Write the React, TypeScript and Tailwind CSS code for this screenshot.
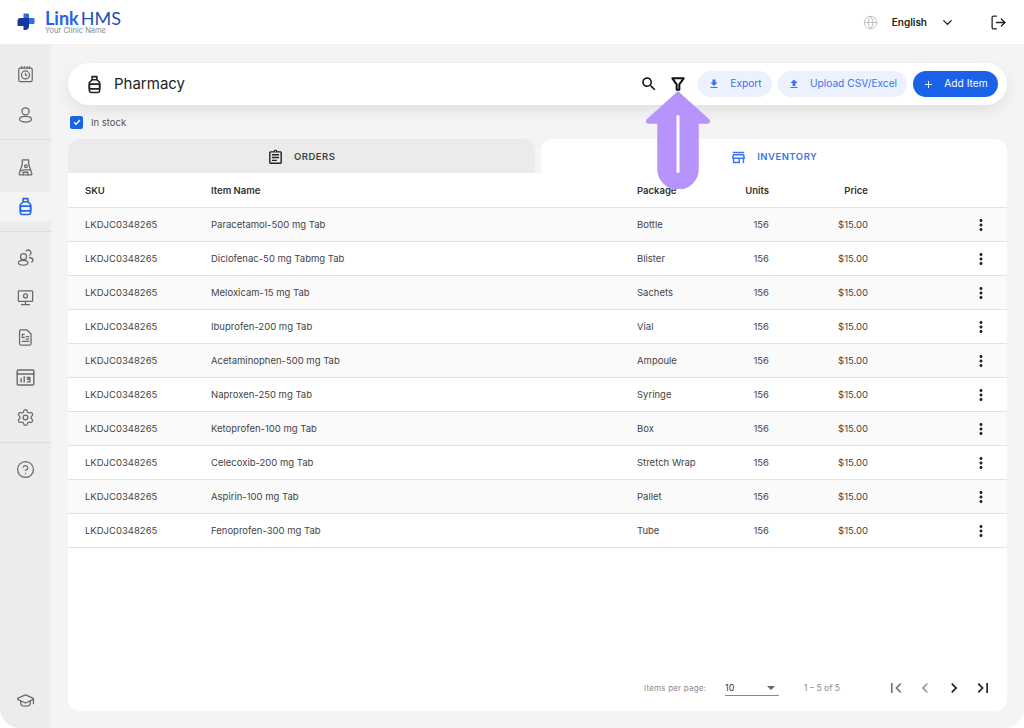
import { ChevronDown, CircleHelp, GraduationCap, Globe, LogOut, Plus, Settings } from "lucide-react";

const rows = [
  ["Paracetamol-500 mg Tab", "Bottle"],
  ["Diclofenac-50 mg Tabmg Tab", "Blister"],
  ["Meloxicam-15 mg Tab", "Sachets"],
  ["Ibuprofen-200 mg Tab", "Vial"],
  ["Acetaminophen-500 mg Tab", "Ampoule"],
  ["Naproxen-250 mg Tab", "Syringe"],
  ["Ketoprofen-100 mg Tab", "Box"],
  ["Celecoxib-200 mg Tab", "Stretch Wrap"],
  ["Aspirin-100 mg Tab", "Pallet"],
  ["Fenoprofen-300 mg Tab", "Tube"],
];

function Mat({ d, className }: { d: string; className?: string }) {
  return (
    <svg viewBox="0 0 24 24" fill="currentColor" className={className}>
      <path d={d} />
    </svg>
  );
}

function Line({ children, className }: { children: React.ReactNode; className?: string }) {
  return (
    <svg viewBox="0 0 24 24" fill="none" stroke="currentColor" strokeWidth="1.6" strokeLinecap="round" strokeLinejoin="round" className={className}>
      {children}
    </svg>
  );
}

function Bottle({ className }: { className?: string }) {
  return (
    <svg viewBox="0 0 24 24" fill="none" stroke="currentColor" strokeWidth="2" strokeLinejoin="round" className={className}>
      <path d="M9 2h6v4H9z" />
      <path d="M9 6 5.500 9.500V20a2 2 0 0 0 2 2h9a2 2 0 0 0 2-2V9.500L15 6" />
      <path d="M5.500 11.500h13v6h-13z" />
    </svg>
  );
}

function NavItem({ children, active }: { children: React.ReactNode; active?: boolean }) {
  return (
    <div className={`flex h-[29px] items-center justify-center ${active ? "bg-[#f4f4f4] text-[#2563eb]" : "text-[#6a6a6a]"}`}>
      {children}
    </div>
  );
}

function Sidebar() {
  const ic = "h-[19px] w-[19px]";
  return (
    <aside className="flex w-[51px] shrink-0 flex-col rounded-bl-[20px] bg-[#ececec]">
      <div className="flex flex-col gap-[11px] pt-[15px] pb-[10px]">
        <NavItem>
          <Line className={ic}>
            <rect x="3.500" y="4" width="17" height="17" rx="2" />
            <path d="M7 2v2M10.500 2v2M14 2v2M17 2v2" />
            <circle cx="12" cy="12.500" r="5" />
            <path d="M12 10.500v2.200l1.500 1" />
          </Line>
        </NavItem>
        <NavItem>
          <Line className={ic}>
            <circle cx="12" cy="8" r="4.500" />
            <ellipse cx="12" cy="18" rx="7.500" ry="3.500" />
          </Line>
        </NavItem>
      </div>
      <div className="h-px bg-[#dcdcdc]" />
      <div className="flex flex-col pt-[13px] pb-[10px]">
        <NavItem>
          <Line className={ic}>
            <path d="M8 2.500h8v5l4 12.500a1 1 0 0 1-1 1.200H5a1 1 0 0 1-1-1.200L8 7.500z" />
            <path d="M5.500 16.500c4-3 9-1 13-1.500M9 21v-3h6v3" />
            <circle cx="12.500" cy="10.500" r="1.800" />
          </Line>
        </NavItem>
        <div className="h-[10px]" />
        <NavItem active>
          <Bottle className={ic} />
        </NavItem>
      </div>
      <div className="h-px bg-[#dcdcdc]" />
      <div className="flex flex-col gap-[11px] pt-[11px] pb-[10px]">
        <NavItem>
          <Line className={ic}>
            <circle cx="9.500" cy="11" r="3.800" />
            <ellipse cx="9" cy="18.500" rx="6" ry="3" />
            <path d="M13 3.500a3.500 3.500 0 0 1 4.500 5.500M17 12c2.500.3 4.500 1.800 4.500 3.500 0 1-.7 1.800-1.800 2.300" />
          </Line>
        </NavItem>
        <NavItem>
          <Line className={ic}>
            <rect x="3" y="3.500" width="18" height="13.500" rx="1" />
            <circle cx="12" cy="10" r="2.500" />
            <path d="M12 17v3.500M7 21h10" />
          </Line>
        </NavItem>
        <NavItem>
          <Line className={ic}>
            <path d="M6 2.500h8l5 5V20a1.500 1.500 0 0 1-1.500 1.500h-11.500A1.500 1.500 0 0 1 4.500 20V4A1.500 1.500 0 0 1 6 2.500z" />
            <path d="M8 8h2.500M8 12h2.500M8 8.500v3M13 11h3M13 14h3M8 17h8" />
          </Line>
        </NavItem>
        <NavItem>
          <Line className="h-[21px] w-[21px]">
            <rect x="2.500" y="3.500" width="19" height="17" rx="1" />
            <path d="M2.500 8h19M7 13v4M10.500 11v6M14 12h3v2h-3M17 14v3h-3" />
          </Line>
        </NavItem>
        <NavItem>
          <Settings className={ic} strokeWidth={1.6} />
        </NavItem>
      </div>
      <div className="h-px bg-[#dcdcdc]" />
      <div className="pt-[12px]">
        <NavItem>
          <CircleHelp className={ic} strokeWidth={1.6} />
        </NavItem>
      </div>
      <div className="mt-auto pb-[13px]">
        <NavItem>
          <GraduationCap className={ic} strokeWidth={1.6} />
        </NavItem>
      </div>
    </aside>
  );
}

function Header() {
  return (
    <header className="flex h-[45px] shrink-0 items-center border-b border-[#f0f0f0] bg-white pl-[17px] pr-[17px]">
      <svg viewBox="0 0 18 18" className="h-[18px] w-[18px]">
        <path d="M6.500 0.500H11a1 1 0 0 1 1 1V5h-5.500z" fill="#2f6fe4" />
        <path d="M12 5h4.500a1 1 0 0 1 1 1v4a1 1 0 0 1-1 1H12z" fill="#2f6fe4" />
        <path d="M6.500 5H12v8a4 4 0 0 1-4 4H7a.5.500 0 0 1-.5-.5V13H1.500a1 1 0 0 1-1-1V8A3 3 0 0 1 3.500 5z" fill="#14389c" />
      </svg>
      <div className="ml-[10px] flex flex-col font-['Lato',sans-serif]">
        <div className="h-[18px] text-[18px] leading-[18px]">
          <span className="font-bold text-[#2563eb]">Link</span>
          <span className="ml-[2px] text-[#2050b8]">HMS</span>
        </div>
        <div className="h-[8px] font-['Inter',sans-serif] text-[7.500px] leading-[8px] text-[#8a8a8a]">Your Clinic Name</div>
      </div>
      <Globe className="ml-auto h-[15px] w-[15px] text-[#bdbdbd]" strokeWidth={1.5} />
      <span className="ml-[14px] font-['Inter',sans-serif] text-[10px] font-semibold text-[#222]">English</span>
      <ChevronDown className="ml-[13px] h-[15px] w-[15px] text-[#222]" strokeWidth={2.2} />
      <LogOut className="ml-[35px] h-[17px] w-[17px] text-[#222]" strokeWidth={1.8} />
    </header>
  );
}

function Toolbar() {
  return (
    <div className="flex h-[42px] items-center rounded-[21px] bg-white pl-[17px] pr-[9px] shadow-[0_6px_16px_rgba(0,0,0,0.08)]">
      <Bottle className="h-[19px] w-[19px] text-[#222]" />
      <h1 className="ml-[10px] text-[15px] font-normal text-[#222]">Pharmacy</h1>
      <Mat
        className="ml-auto h-[18px] w-[18px] text-[#111]"
        d="M15.500 14h-.79l-.28-.27C15.410 12.590 16 11.110 16 9.500 16 5.910 13.090 3 9.500 3S3 5.910 3 9.500 5.910 16 9.500 16c1.610 0 3.090-.59 4.230-1.570l.27.28v.79l5 4.990L20.490 19l-4.990-5zm-6 0C7.010 14 5 11.990 5 9.500S7.010 5 9.500 5 14 7.010 14 9.500 11.990 14 9.500 14z"
      />
      <svg viewBox="0 0 24 24" fill="none" stroke="#111" strokeWidth="3" strokeLinejoin="round" className="ml-[12px] h-[16px] w-[16px]">
        <path d="M3.500 3.500h17L14 12.500v8h-4v-8z" />
      </svg>
      <button className="ml-[12px] flex h-[26px] w-[74px] items-center justify-center gap-[10px] rounded-[13px] bg-[#ebf2fe] text-[10.200px] text-[#3b74e8]">
        <Mat className="h-[12px] w-[12px]" d="M19 9h-4V3H9v6H5l7 7 7-7zM5 18v2h14v-2H5z" />
        Export
      </button>
      <button className="ml-[6px] flex h-[26px] w-[129px] items-center justify-center gap-[10px] rounded-[13px] bg-[#ebf2fe] text-[10.200px] text-[#3b74e8]">
        <Mat className="h-[12px] w-[12px]" d="M9 16h6v-6h4l-7-7-7 7h4zm-4 2h14v2H5z" />
        Upload CSV/Excel
      </button>
      <button className="ml-[6px] flex h-[26px] w-[85px] items-center justify-center gap-[10px] rounded-[13px] bg-[#1a62e8] text-[10.200px] text-white">
        <Plus className="h-[11px] w-[11px]" strokeWidth={2} />
        Add Item
      </button>
    </div>
  );
}

function Tabs() {
  return (
    <div className="flex h-[34px] gap-[6px]">
      <div className="flex flex-1 items-center justify-center gap-[10px] rounded-t-[12px] bg-[#ebebeb] pt-[2px] text-[9.500px] font-semibold tracking-[0.5px] text-[#444]">
        <Mat
          className="h-[17px] w-[17px] text-[#222]"
          d="M19 3h-4.180C14.400 1.840 13.300 1 12 1s-2.400.84-2.820 2H5c-1.100 0-2 .9-2 2v14c0 1.100.9 2 2 2h14c1.100 0 2-.9 2-2V5c0-1.100-.9-2-2-2zm-7-.25c.41 0 .75.34.75.75s-.34.75-.75.75-.75-.34-.75-.75.34-.75.75-.75zM19 19H5V5h14v14zM7 7h10v2H7zm0 4h10v2H7zm0 4h7v2H7z"
        />
        ORDERS
      </div>
      <div className="flex flex-1 items-center justify-center gap-[10px] rounded-t-[12px] bg-white pt-[2px] text-[9.500px] font-semibold tracking-[0.5px] text-[#3b74e8]">
        <Mat
          className="h-[17px] w-[17px]"
          d="M18.360 9l.6 3H5.040l.6-3h12.720M20 4H4v2h16V4zm0 3H4l-1 5v2h1v6h10v-6h4v6h2v-6h1v-2l-1-5zM6 18v-4h6v4H6z"
        />
        INVENTORY
      </div>
    </div>
  );
}

const cols = "grid grid-cols-[126px_426px_108px_24px_99px_1fr] items-center pl-[17px] pt-[2px] text-[9.500px]";

function Table() {
  return (
    <div className="flex flex-1 flex-col rounded-b-[12px] bg-white">
      <div className={`${cols} h-[35px] border-b border-[#e2e2e2] font-semibold text-[#333]`}>
        <span>SKU</span>
        <span>Item Name</span>
        <span>Package</span>
        <span className="text-right">Units</span>
        <span className="text-right">Price</span>
      </div>
      {rows.map(([name, pkg], i) => (
        <div key={name} className={`${cols} h-[34px] border-b border-[#e2e2e2] text-[#444] ${i % 2 === 0 ? "bg-[#fafafa]" : "bg-white"}`}>
          <span>LKDJC0348265</span>
          <span>{name}</span>
          <span>{pkg}</span>
          <span className="text-right">156</span>
          <span className="text-right">$15.00</span>
          <span className="-mt-[2px] flex justify-end pr-[17px]">
            <Mat
              className="h-[18px] w-[18px] text-[#222]"
              d="M12 8c1.100 0 2-.9 2-2s-.9-2-2-2-2 .9-2 2 .9 2 2 2zm0 2c-1.100 0-2 .9-2 2s.9 2 2 2 2-.9 2-2-.9-2-2-2zm0 6c-1.100 0-2 .9-2 2s.9 2 2 2 2-.9 2-2-.9-2-2-2z"
            />
          </span>
        </div>
      ))}
      <div className="mt-auto flex h-[46px] items-center pb-[1px] pl-[576px] text-[#8a8a8a]">
        <span className="w-[62px] whitespace-nowrap text-[8px] tracking-[0.2px]">Items per page:</span>
        <div className="ml-[19px] flex h-[17px] w-[54px] items-center justify-between border-b border-[#8a8a8a] pt-[1px] text-[9px] text-[#333]">
          10
          <span className="mr-[4px] h-0 w-0 border-x-[4px] border-t-[4px] border-x-transparent border-t-[#666]" />
        </div>
        <span className="ml-[25px] w-[40px] whitespace-nowrap pt-[2px] text-[8.500px]">1 – 5 of 5</span>
        <div className="ml-[42px] flex gap-[9px]">
          <Mat className="h-[20px] w-[20px] text-[#777]" d="M18.410 16.590L13.820 12l4.590-4.590L17 6l-6 6 6 6zM6 6h2v12H6z" />
          <Mat className="h-[20px] w-[20px] text-[#999]" d="M15.410 7.410L14 6l-6 6 6 6 1.410-1.410L10.830 12z" />
          <Mat className="h-[20px] w-[20px] text-[#222]" d="M10 6L8.590 7.410 13.170 12l-4.580 4.590L10 18l6-6z" />
          <Mat className="h-[20px] w-[20px] text-[#222]" d="M5.590 7.410L10.180 12l-4.590 4.590L7 18l6-6-6-6zM16 6h2v12h-2z" />
        </div>
      </div>
    </div>
  );
}

export default function App() {
  return (
    <div className="relative flex h-[728px] w-[1024px] flex-col overflow-hidden bg-white font-['Inter',sans-serif]">
      <Header />
      <div className="flex min-h-0 flex-1">
        <Sidebar />
        <main className="flex flex-1 flex-col rounded-br-[20px] bg-[#f4f4f4] px-[17px] pb-[17px] pt-[18px]">
          <Toolbar />
          <label className="flex h-[34px] items-center gap-[8px] pl-[2px] text-[9.500px] text-[#555]">
            <span className="flex h-[13px] w-[13px] items-center justify-center rounded-[2px] bg-[#1a62e8]">
              <svg viewBox="0 0 12 12" fill="none" stroke="white" strokeWidth="1.600" className="h-[10px] w-[10px]">
                <path d="M2.500 6.200l2.400 2.400 4.600-5" />
              </svg>
            </span>
            <span className="pt-[2px]">In stock</span>
          </label>
          <Tabs />
          <Table />
        </main>
      </div>
      <svg viewBox="0 0 64 98" className="absolute left-[646px] top-[91px] h-[98px] w-[64px]">
        <path d="M32 1 63 29a1.800 1.800 0 0 1-1.500 3H52v46a20 20 0 0 1-40 0V32H2.500A1.800 1.800 0 0 1 1 29z" fill="#b794fb" stroke="#b794fb" strokeLinejoin="round" strokeWidth="1.500" />
        <rect x="30.500" y="24" width="3" height="58" rx="1.500" fill="white" />
      </svg>
    </div>
  );
}
